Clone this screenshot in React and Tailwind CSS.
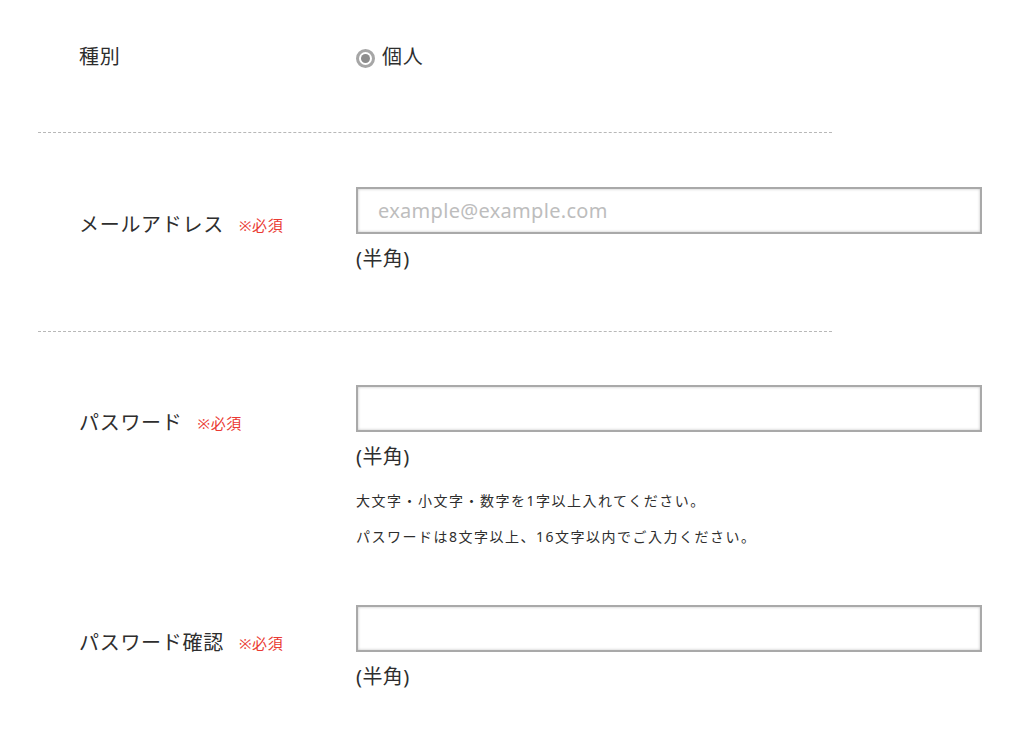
import React from 'react';

const font = { fontFamily: '"Noto Sans", "Noto Sans CJK JP", sans-serif' };

const Required = () => <span className="ml-[15px] text-[15px] tracking-[0.6px] text-[#ea3a33]">※必須</span>;

const Label = ({ children, required }) => (
  <div className="w-[277px] shrink-0 pt-[23px] flex items-center text-[20px] leading-[30px] tracking-[0.7px] text-[#2e2e2e]">
    <span>{children}</span>
    {required && <Required />}
  </div>
);

const TextInput = ({ placeholder, type = 'text' }) => (
  <input
    type={type}
    placeholder={placeholder}
    className="block w-[626px] h-[47px] border-2 border-[#a9a9a9] bg-white px-[20px] text-[20px] tracking-[0.3px] text-[#333] placeholder:text-[#bdbdbd] shadow-[inset_0_0_3px_rgba(0,0,0,0.25)] outline-none"
  />
);

const Hankaku = () => <p className="mt-[10px] text-[20px] leading-[30px] tracking-[0.4px] text-[#2e2e2e]">(半角)</p>;

const Divider = () => <div className="ml-[38px] w-[794px] border-t border-dashed border-[#b8b8b8]" />;

export default function App() {
  return (
    <div className="w-[1024px] h-[736px] bg-white overflow-hidden" style={font}>
      <div className="flex items-start pl-[79px] pt-[42px]">
        <div className="w-[277px] shrink-0 text-[20px] leading-[30px] tracking-[0.7px] text-[#2e2e2e]">種別</div>
        <label className="flex items-center gap-[7px] text-[20px] leading-[30px] tracking-[0.7px] text-[#2e2e2e]">
          <span className="mt-[2px] w-[19px] h-[19px] rounded-full border-[3px] border-[#a6a6a6] flex items-center justify-center">
            <span className="w-[9px] h-[9px] rounded-full bg-[#8c8c8c]" />
          </span>
          個人
        </label>
      </div>

      <div className="mt-[60px]">
        <Divider />
      </div>

      <div className="flex items-start pl-[79px] mt-[54px]">
        <Label required>メールアドレス</Label>
        <div>
          <TextInput type="email" placeholder="example@example.com" />
          <Hankaku />
        </div>
      </div>

      <div className="mt-[57px]">
        <Divider />
      </div>

      <div className="flex items-start pl-[79px] mt-[53px]">
        <Label required>パスワード</Label>
        <div>
          <TextInput type="password" />
          <Hankaku />
          <p className="mt-[19px] text-[14px] leading-[20px] tracking-[1.5px] text-[#2e2e2e]">大文字・小文字・数字を1字以上入れてください。</p>
          <p className="mt-[16px] text-[14px] leading-[20px] tracking-[1.5px] text-[#2e2e2e]">パスワードは8文字以上、16文字以内でご入力ください。</p>
        </div>
      </div>

      <div className="flex items-start pl-[79px] mt-[58px]">
        <Label required>パスワード確認</Label>
        <div>
          <TextInput type="password" />
          <Hankaku />
        </div>
      </div>
    </div>
  );
}
